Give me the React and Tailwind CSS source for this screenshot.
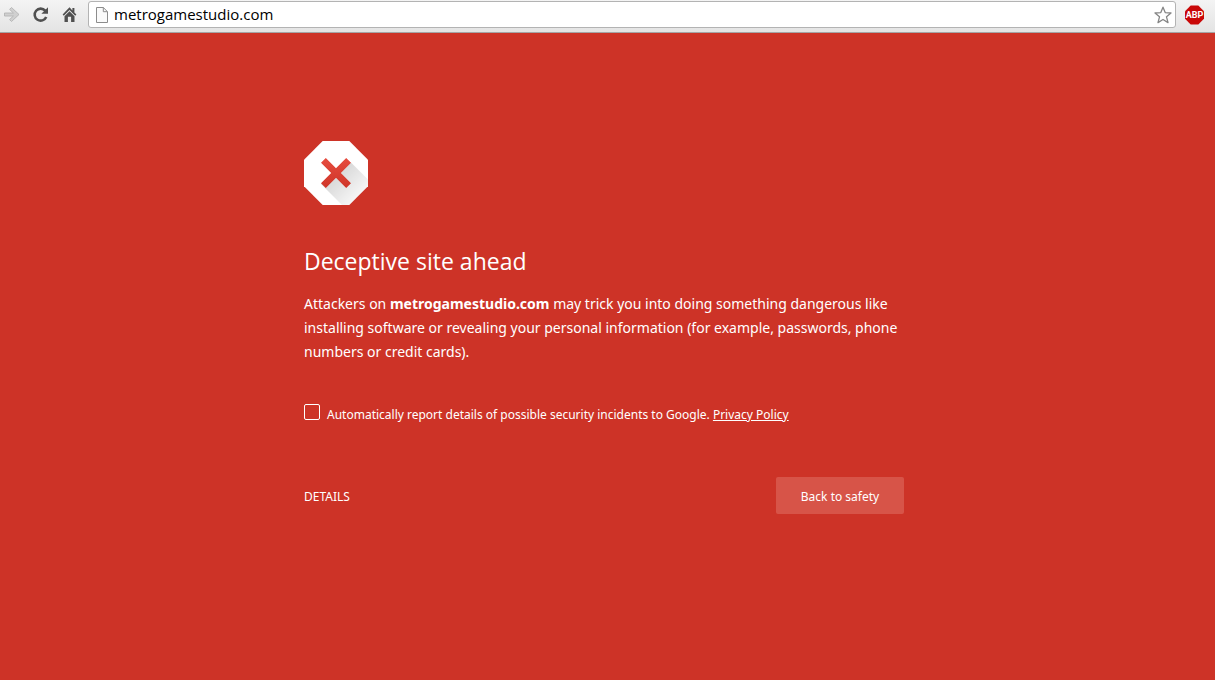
function Toolbar() {
  return (
    <header className="flex h-[33px] shrink-0 items-start border-b border-[#a5a5a5] bg-linear-to-b from-[#f4f4f4] to-[#e4e4e4] pr-[10px]">
      <nav className="flex h-[29px] shrink-0 items-center" aria-label="Navigation">
        <button aria-label="Forward" className="block">
          <svg className="block h-[29px] w-[24px]" viewBox="0 0 24 29">
            <path d="M4.5 13h8.9L9.6 9.4l1.9-1.9 7.5 7-7.5 7-1.9-1.9 3.8-3.6H4.5z" fill="#d0d0d0" stroke="#b4b4b4" strokeWidth=".9" />
          </svg>
        </button>
        <button aria-label="Reload" className="block">
          <svg className="block h-[29px] w-[32px]" viewBox="24 0 32 29">
            <path d="M45.2 10.7A6 6 0 1 0 46.2 17" fill="none" stroke="#505050" strokeWidth="2.6" />
            <path d="M48 7.2v6.6h-6.6z" fill="#505050" />
          </svg>
        </button>
        <button aria-label="Home" className="block">
          <svg className="block h-[29px] w-[32px]" viewBox="56 0 32 29">
            <path d="M69.5 7.3 62.6 14.6l1.2 1.1 5.7-5.7 5.7 5.7 1.2-1.1-2-2.1V8h-2v2.4z" fill="#505050" />
            <path d="M64.5 16.2l5-5 5 5V22h-3.4v-5.2h-3.2V22h-3.4z" fill="#505050" />
          </svg>
        </button>
      </nav>
      <div className="mt-px flex h-[27px] min-w-0 flex-1 items-center rounded-[3px] border border-[#b3b3b3] bg-white pr-[3px] pl-[6px]">
        <svg className="h-[16px] w-[14px] shrink-0" viewBox="0 0 14 16" aria-hidden="true">
          <path d="M1.5.5h6.8l4.2 4.2v10.8h-11z" fill="#fafafa" stroke="#8c8c8c" />
          <path d="M8.3.5v4.2h4.2" fill="none" stroke="#8c8c8c" />
        </svg>
        <input
          aria-label="Address"
          defaultValue="metrogamestudio.com"
          className="ml-[5px] h-[24px] min-w-0 flex-1 bg-transparent pb-[2px] font-['Open_Sans',sans-serif] text-[15px] text-black outline-none"
        />
        <button aria-label="Bookmark this page" className="shrink-0">
          <svg className="block h-[18px] w-[18px]" viewBox="0 0 18 18">
            <path d="M9 1.2 11.2 6.6 17 7l-4.5 3.8 1.5 5.8L9 13.5l-5 3.1 1.5-5.8L1 7l5.8-.4z" fill="#fff" stroke="#858585" strokeWidth="1.3" strokeLinejoin="round" />
          </svg>
        </button>
      </div>
      <button aria-label="Adblock Plus" className="ml-[8px] flex h-[29px] shrink-0 items-center">
        <svg className="h-[20px] w-[21px]" viewBox="0 0 21 20">
          <path d="M6.7.5h7.6l5.7 5.7v7.6l-5.7 5.7H6.7L1 13.8V6.2z" fill="#c90808" />
          <text x="10.5" y="13.3" textAnchor="middle" fill="#fff" className="font-[Roboto,sans-serif] text-[9px] font-bold">ABP</text>
        </svg>
      </button>
    </header>
  );
}

function WarningIcon() {
  return (
    <svg className="block h-[64px] w-[64px]" viewBox="0 0 64 64" aria-hidden="true">
      <defs>
        <linearGradient id="shade" gradientUnits="userSpaceOnUse" x1="30" y1="30" x2="54" y2="54">
          <stop offset="0" stopColor="#000" stopOpacity=".17" />
          <stop offset="1" stopColor="#000" stopOpacity=".04" />
        </linearGradient>
        <linearGradient id="cross" x1="0" y1="0" x2="0" y2="1">
          <stop offset="0" stopColor="#e64c3f" />
          <stop offset="1" stopColor="#cf3528" />
        </linearGradient>
        <clipPath id="octagon">
          <path d="M18.7 0h26.6L64 18.7v26.6L45.3 64H18.7L0 45.3V18.7z" />
        </clipPath>
      </defs>
      <g clipPath="url(#octagon)">
        <path d="M0 0h64v64H0z" fill="#fff" />
        <path d="M47 21.6 90 64.6 64 90 17 43z" fill="url(#shade)" />
        <path d="M21.8 17 32 27.2 42.2 17l4.8 4.8L36.8 32 47 42.2 42.2 47 32 36.8 21.8 47 17 42.2 27.2 32 17 21.8z" fill="url(#cross)" />
      </g>
    </svg>
  );
}

export default function App() {
  return (
    <div className="flex min-h-screen flex-col bg-[#cd3327] font-['Noto_Sans',sans-serif] text-white">
      <Toolbar />
      <main className="flex-1 pt-[108px] pr-[7px] pb-10">
        <div className="mx-auto max-w-[600px]">
          <WarningIcon />
          <h1 className="mt-[40px] font-['Open_Sans',sans-serif] text-[23px] leading-[32px]">Deceptive site ahead</h1>
          <p className="mt-[15px] text-[14px] leading-[24px]">
            Attackers on <strong>metrogamestudio.com</strong> may trick you into doing something dangerous like installing software or revealing your personal information (for example, passwords, phone numbers or credit cards).
          </p>
          <div className="mt-[40px] flex items-start text-[12px] leading-[22px]">
            <input
              id="report"
              type="checkbox"
              className="h-[16px] w-[16px] shrink-0 appearance-none rounded-[2px] border border-white checked:bg-white/40"
            />
            <p className="ml-[7px]">
              <label htmlFor="report">Automatically report details of possible security incidents to Google.</label>{" "}
              <a href="#privacy" className="underline">Privacy Policy</a>
            </p>
          </div>
          <div className="mt-[51px] flex items-center justify-between text-[12px] leading-[20px]">
            <button className="h-[37px] pt-[2px]">DETAILS</button>
            <button className="h-[37px] min-w-[128px] rounded-[2px] bg-[#d75448] px-[24px] pt-[2px]">Back to safety</button>
          </div>
        </div>
      </main>
    </div>
  );
}
